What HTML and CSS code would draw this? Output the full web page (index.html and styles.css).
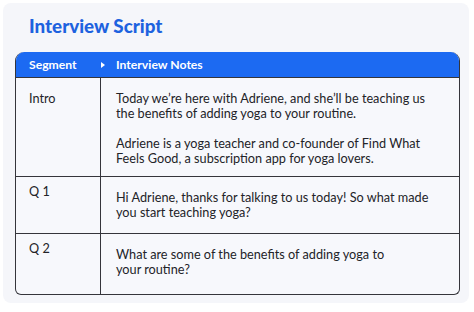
FILE: index.html
```html
<!DOCTYPE html>
<html lang="en">
<head>
<meta charset="utf-8">
<title>Interview Script</title>
<link rel="stylesheet" href="styles.css">
</head>
<body>
<div class="card">
  <h1 class="title">Interview Script</h1>
  <div class="table">
    <div class="head">
      <div class="hcell hseg">Segment</div>
      <div class="hcell hnotes">Interview Notes</div>
      <span class="arrow"></span>
    </div>
    <div class="row row-intro">
      <div class="cell seg">Intro</div>
      <div class="cell notes">
        <p>Today we’re here with Adriene, and she’ll be teaching us the benefits of adding yoga to your routine.</p>
        <p>Adriene is a yoga teacher and co-founder of Find What Feels Good, a subscription app for yoga lovers.</p>
      </div>
    </div>
    <div class="row row-q1">
      <div class="cell seg">Q 1</div>
      <div class="cell notes">
        <p>Hi Adriene, thanks for talking to us today! So what made you start teaching yoga?</p>
      </div>
    </div>
    <div class="row row-q2">
      <div class="cell seg">Q 2</div>
      <div class="cell notes">
        <p>What are some of the benefits of adding yoga to<br>your routine?</p>
      </div>
    </div>
  </div>
</div>
</body>
</html>
```
FILE: styles.css
```css
* { box-sizing: border-box; }
html, body { margin: 0; padding: 0; background: #ffffff; }
body { font-family: "Lato", "Liberation Sans", sans-serif; color: #232328; }

.card {
  margin: 3px;
  width: 466px;
  height: 300px;
  background: #f5f6fa;
  border-radius: 8px;
  padding: 11px 12px 0 12px;
}

.title {
  margin: 0 0 14px 14px;
  font-family: "Lato", sans-serif;
  font-weight: 900;
  font-size: 18.8px;
  line-height: 24px;
  color: #1d62df;
}

.table {
  width: 445px;
  border: 1px solid #35353b;
  border-top: none;
  border-radius: 9px 9px 6px 6px;
  background: #f7f8fc;
  overflow: hidden;
}

.head {
  position: relative;
  display: flex;
  align-items: center;
  height: 25px;
  background: #1c6af2;
  color: #ffffff;
  font-weight: 700;
  font-size: 12.2px;
}
.hseg { width: 85px; padding-left: 13px; }
.hnotes { padding-left: 15px; }

.arrow {
  position: absolute;
  left: 85px;
  top: 10px;
  width: 0;
  height: 0;
  border-top: 3px solid transparent;
  border-bottom: 3px solid transparent;
  border-left: 4px solid #ffffff;
}

.row {
  display: flex;
  border-top: 1px solid #35353b;
  font-size: 12.7px;
  line-height: 15px;
}

.cell.seg {
  width: 85px;
  flex: none;
  padding: 13px 0 0 13px;
  border-right: 1px solid #35353b;
}

.cell.notes {
  flex: 1;
  padding: 13px 20px 0 15px;
}

.notes p { margin: 0 0 15px 0; }
.notes p:last-child { margin-bottom: 0; }

.row-intro .cell { padding-bottom: 10px; }
.row-q1 .seg, .row-q2 .seg { padding-top: 7px; }
.row-q1 .cell { padding-bottom: 13px; }
.row-q2 .cell { padding-bottom: 17px; }
```
